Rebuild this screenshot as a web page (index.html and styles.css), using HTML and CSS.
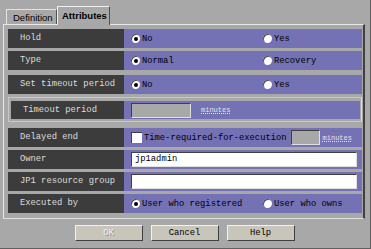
FILE: index.html
```html
<!DOCTYPE html>
<html>
<head>
<meta charset="utf-8">
<link rel="stylesheet" href="styles.css">
</head>
<body>
<div class="window">
  <div class="tabs">
    <div class="tab">Definition</div>
    <div class="tab active">Attributes</div>
  </div>
  <div class="panel">
    <div class="row">
      <div class="label">Hold</div>
      <div class="value">
        <span class="opt"><span class="radio on"></span>No</span>
        <span class="opt"><span class="radio"></span>Yes</span>
      </div>
    </div>
    <div class="row">
      <div class="label">Type</div>
      <div class="value">
        <span class="opt"><span class="radio on"></span>Normal</span>
        <span class="opt"><span class="radio"></span>Recovery</span>
      </div>
    </div>
    <div class="row sep">
      <div class="label">Set timeout period</div>
      <div class="value">
        <span class="opt"><span class="radio on"></span>No</span>
        <span class="opt"><span class="radio"></span>Yes</span>
      </div>
    </div>
    <div class="group">
      <div class="row inner">
        <div class="label ind">Timeout period</div>
        <div class="value">
          <span class="field gray wide"></span>
          <span class="unit">minutes</span>
        </div>
      </div>
    </div>
    <div class="row sep2">
      <div class="label">Delayed end</div>
      <div class="value">
        <span class="check"></span>
        <span class="ctext">Time-required-for-execution</span>
        <span class="field gray short"></span>
        <span class="unit">minutes</span>
      </div>
    </div>
    <div class="row">
      <div class="label">Owner</div>
      <div class="value">
        <span class="field white">jp1admin</span>
      </div>
    </div>
    <div class="row">
      <div class="label">JP1 resource group</div>
      <div class="value">
        <span class="field white"></span>
      </div>
    </div>
    <div class="row">
      <div class="label">Executed by</div>
      <div class="value">
        <span class="opt"><span class="radio on"></span>User who registered</span>
        <span class="opt last"><span class="radio"></span>User who owns</span>
      </div>
    </div>
  </div>
  <div class="buttons">
    <div class="btn disabled">OK</div>
    <div class="btn">Cancel</div>
    <div class="btn">Help</div>
  </div>
</div>
</body>
</html>
```
FILE: styles.css
```css
html, body {
  margin: 0;
  padding: 0;
}
body {
  background: #a8a8a8;
  width: 371px;
  height: 249px;
  overflow: hidden;
}
.window {
  width: 371px;
  height: 249px;
  box-sizing: border-box;
  border-right: 1px solid #606060;
  border-bottom: 1px solid #606060;
  overflow: hidden;
}
.tabs {
  display: flex;
  align-items: flex-end;
  height: 24px;
  padding-left: 6px;
}
.tab {
  font-family: "Liberation Sans", Arial, sans-serif;
  font-size: 9.5px;
  color: #000;
  height: 15px;
  line-height: 15px;
  padding: 0 5px 0 6px;
  border-top: 1px solid #e4e4e4;
  border-left: 1px solid #e4e4e4;
  border-right: 1px solid #505050;
  box-sizing: border-box;
  width: 51px;
}
.tab.active {
  font-weight: bold;
  height: 19px;
  line-height: 17px;
  width: 53px;
  padding-left: 4px;
  border-top: 1px solid #f0f0f0;
  border-left: 1px solid #f0f0f0;
  margin-bottom: -1px;
  background: #a8a8a8;
  position: relative;
  z-index: 1;
}
.panel {
  margin-left: 3px;
  width: 362px;
  height: 195px;
  box-sizing: border-box;
  border-top: 1px solid #e8e8e8;
  border-left: 1px solid #e8e8e8;
  border-right: 2px solid #404040;
  border-bottom: 1px solid #e0e0e0;
  padding: 4px 0 0 4px;
  display: flex;
  flex-direction: column;
  gap: 3px;
}
.row {
  display: flex;
  height: 19px;
  width: 354px;
  flex: none;
}
.row.sep {
  margin-top: 2px;
}
.row.sep2 {
  margin-top: 3px;
}
.label {
  width: 116px;
  flex: none;
  background: #3c3c3c;
  color: #dcdcdc;
  font-family: "Liberation Mono", "Courier New", monospace;
  font-size: 8.8px;
  line-height: 19px;
  padding-left: 12px;
  box-sizing: border-box;
  white-space: nowrap;
}
.label.ind {
  width: 113px;
  padding-left: 12px;
}
.value {
  flex: 1;
  min-width: 0;
  overflow: hidden;
  background: #7471b5;
  display: flex;
  align-items: center;
  padding-left: 7px;
  font-family: "Liberation Mono", "Courier New", monospace;
  font-size: 8.8px;
  color: #000;
  white-space: nowrap;
}
.opt {
  display: flex;
  align-items: center;
  width: 132px;
  flex: none;
}
.opt.last {
  width: auto;
}
.radio {
  width: 9px;
  height: 9px;
  border-radius: 50%;
  background: #fff;
  box-shadow: inset 1px 1px 0 #505050;
  margin-right: 2px;
  position: relative;
  flex: none;
}
.radio.on::after {
  content: "";
  position: absolute;
  left: 3px;
  top: 3px;
  width: 4px;
  height: 4px;
  border-radius: 50%;
  background: #000;
}
.group {
  width: 354px;
  height: 25px;
  box-sizing: border-box;
  border: 1px solid #c8c8c8;
  border-right-color: #e0e0e0;
  padding: 3px 0 0 2px;
  flex: none;
}
.row.inner {
  width: 349px;
  height: 18px;
}
.row.inner .label {
  line-height: 18px;
}
.field {
  display: block;
  box-sizing: border-box;
  height: 15px;
  border-top: 1px solid #404040;
  border-left: 1px solid #404040;
  border-bottom: 1px solid #e0e0e0;
  border-right: 1px solid #e0e0e0;
  flex: none;
}
.field.gray {
  background: #a8a8a8;
}
.field.wide {
  width: 60px;
}
.field.short {
  width: 29px;
  margin-left: 4px;
}
.field.white {
  background: #fff;
  width: 226px;
  padding-left: 3px;
  line-height: 13px;
  color: #000;
}
.unit {
  color: #e4e4e4;
  font-size: 7px;
  text-decoration: underline dotted;
  margin-left: 10px;
}
.field.short + .unit {
  margin-left: 3px;
}
.check {
  width: 11px;
  height: 11px;
  box-sizing: border-box;
  background: #fff;
  border-top: 1px solid #404040;
  border-left: 1px solid #404040;
  margin-right: 2px;
  flex: none;
}
.buttons {
  display: flex;
  justify-content: center;
  gap: 8px;
  margin-top: 6px;
  padding-right: 1px;
}
.btn {
  width: 68px;
  height: 16px;
  box-sizing: border-box;
  background: #c8c5ba;
  border-top: 1px solid #f2f2f2;
  border-left: 1px solid #f2f2f2;
  border-right: 1px solid #404040;
  border-bottom: 1px solid #404040;
  font-family: "Liberation Mono", "Courier New", monospace;
  font-size: 8.8px;
  line-height: 14px;
  text-align: center;
  color: #000;
}
.btn.disabled {
  color: #f4f4f4;
  text-shadow: 1px 1px 0 #8c8c8c;
}
```
